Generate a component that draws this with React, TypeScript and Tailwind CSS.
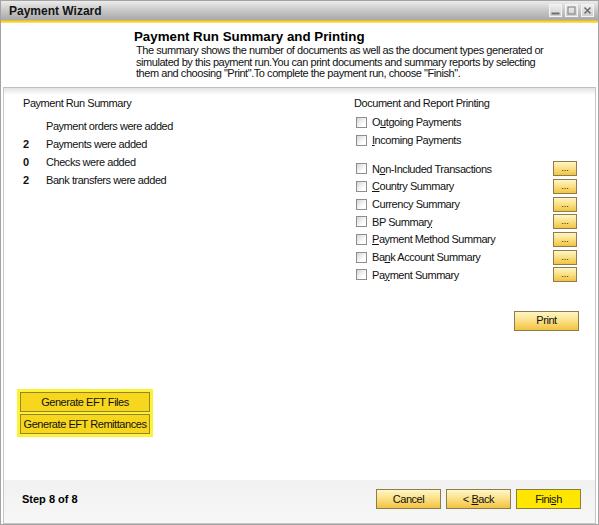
import React from "react";

type Mnemonic = { pre: string; accel?: string; post?: string };

// Text with an underlined access key, the way the dialog labels show it
const Label = ({ pre, accel, post }: Mnemonic) => (
  <>
    {pre}
    {accel && <span className="underline underline-offset-[1px]">{accel}</span>}
    {post}
  </>
);

const summaryRows = [
  { count: "", text: "Payment orders were added" },
  { count: "2", text: "Payments were added" },
  { count: "0", text: "Checks were added" },
  { count: "2", text: "Bank transfers were added" },
];

const documentRows: Mnemonic[] = [
  { pre: "O", accel: "u", post: "tgoing Payments" },
  { pre: "", accel: "I", post: "ncoming Payments" },
];

const reportRows: Mnemonic[] = [
  { pre: "N", accel: "o", post: "n-Included Transactions" },
  { pre: "", accel: "C", post: "ountry Summary" },
  { pre: "Currency Summary" },
  { pre: "BP Summar", accel: "y", post: "" },
  { pre: "", accel: "P", post: "ayment Method Summary" },
  { pre: "Ba", accel: "n", post: "k Account Summary" },
  { pre: "Pa", accel: "y", post: "ment Summary" },
];

const goldBtn =
  "border border-[#8d7d4a] bg-[linear-gradient(to_bottom,#fff6c8,#fbe28a_45%,#f3c341)] text-[#111] leading-none";

const CheckBox = () => (
  <span className="ml-[1.5px] w-[11px] h-[11px] shrink-0 border border-[#8e8e8e] bg-[linear-gradient(135deg,#d6d6d6,#ffffff_70%)]" />
);

const TitleButton = ({ kind }: { kind: "min" | "max" | "close" }) => (
  <span className="w-[13px] h-[13px] border border-[#f4f4f4] bg-[linear-gradient(to_bottom,#eeeeee,#cfcfcf)] flex items-center justify-center">
    <svg width="9" height="9" viewBox="0 0 9 9">
      {kind === "min" && <rect x="0.5" y="6.5" width="8" height="2" fill="#6e6e6e" />}
      {kind === "max" && (
        <rect x="1" y="1" width="7" height="7" fill="none" stroke="#7a7a7a" strokeWidth="1" />
      )}
      {kind === "close" && (
        <path d="M1.5 1.5 L7.5 7.5 M7.5 1.5 L1.5 7.5" stroke="#6e6e6e" strokeWidth="1.6" />
      )}
    </svg>
  </span>
);

export default function App() {
  return (
    <div className="w-[599px] h-[525px] bg-white border border-[#a3a3a3] flex flex-col font-['Liberation_Sans',Arial,sans-serif] text-[11px] tracking-[-0.45px] text-[#111] overflow-hidden">
      {/* window caption */}
      <div className="h-[19px] shrink-0 flex items-center pl-[8px] pr-[4px] bg-[linear-gradient(to_bottom,#ececec,#c4c4c4_55%,#a9a9a9)]">
        <span className="text-[12px] font-bold tracking-normal text-[#151515]">Payment Wizard</span>
        <div className="ml-auto flex gap-[3px]">
          <TitleButton kind="min" />
          <TitleButton kind="max" />
          <TitleButton kind="close" />
        </div>
      </div>
      <div className="h-[3px] shrink-0 bg-[linear-gradient(to_bottom,#e9b514,#f6cf3d,#fbe58c)]" />

      {/* step header */}
      <div className="h-[64px] shrink-0 pt-[6px] pl-[133px]">
        <div className="text-[13.3px] font-bold leading-[15px] tracking-normal text-black">
          Payment Run Summary and Printing
        </div>
        <div className="ml-[2px] mt-[1px] leading-[11.5px]">
          <div>The summary shows the number of documents as well as the document types generated or</div>
          <div>simulated by this payment run.You can print documents and summary reports by selecting</div>
          <div>them and choosing "Print".To complete the payment run, choose "Finish".</div>
        </div>
      </div>

      <div className="flex-1 mx-[2px] border-x border-b border-[#c6c6c6] flex flex-col">
        {/* main content */}
        <div className="h-[393px] shrink-0 border-t border-[#bdbdbd] bg-[linear-gradient(to_bottom,#e3e3e3,#ffffff_7px)] flex pl-[19px] pt-[9px]">
          <div className="w-[331px] flex flex-col">
            <div className="leading-[12px]">Payment Run Summary</div>
            <div className="mt-[8px]">
              {summaryRows.map((row) => (
                <div key={row.text} className="h-[18px] flex items-center">
                  <span className="w-[23px] font-bold">{row.count}</span>
                  <span>{row.text}</span>
                </div>
              ))}
            </div>

            <div className="mt-auto mb-[43px] -ml-[6px] w-[136px] p-[3px] bg-[#fbf33a] flex flex-col gap-[2px]">
              <button className="h-[20px] w-[130px] border border-[#978524] bg-[#f7d71e] leading-none">
                Generate EFT Files
              </button>
              <button className="h-[20px] w-[130px] border border-[#978524] bg-[#f7d71e] leading-none">
                Generate EFT Remittances
              </button>
            </div>
          </div>

          <div className="w-[226px] flex flex-col">
            <div className="leading-[12px]">Document and Report Printing</div>
            <div className="mt-[4px]">
              {documentRows.map((row, i) => (
                <div key={i} className="h-[18px] flex items-center">
                  <CheckBox />
                  <span className="ml-[5.5px]">
                    <Label {...row} />
                  </span>
                </div>
              ))}
            </div>
            <div className="mt-[11px]">
              {reportRows.map((row, i) => (
                <div key={i} className="h-[17.67px] flex items-center">
                  <CheckBox />
                  <span className="ml-[5.5px]">
                    <Label {...row} />
                  </span>
                  <button className={`ml-auto mr-[3px] w-[24px] h-[15px] text-[9px] tracking-normal ${goldBtn}`}>
                    ...
                  </button>
                </div>
              ))}
            </div>
            <button className={`mt-[27px] self-end mr-[1px] w-[65px] h-[20px] ${goldBtn}`}>Print</button>
          </div>
        </div>

        {/* wizard footer */}
        <div className="flex-1 bg-[linear-gradient(to_bottom,#f1f1f1,#f7f7f7)] flex items-start pt-[9px] pl-[18px] pr-[14px]">
          <span className="leading-[20px] font-bold tracking-normal text-black">Step 8 of 8</span>
          <div className="ml-auto flex gap-[5px]">
            <button className={`w-[65px] h-[20px] ${goldBtn}`}>Cancel</button>
            <button className={`w-[65px] h-[20px] ${goldBtn}`}>
              <Label pre="< " accel="B" post="ack" />
            </button>
            <button className="w-[65px] h-[20px] border border-[#8a7d3c] bg-[#ffe600] leading-none">
              <Label pre="Fini" accel="s" post="h" />
            </button>
          </div>
        </div>
      </div>
    </div>
  );
}
